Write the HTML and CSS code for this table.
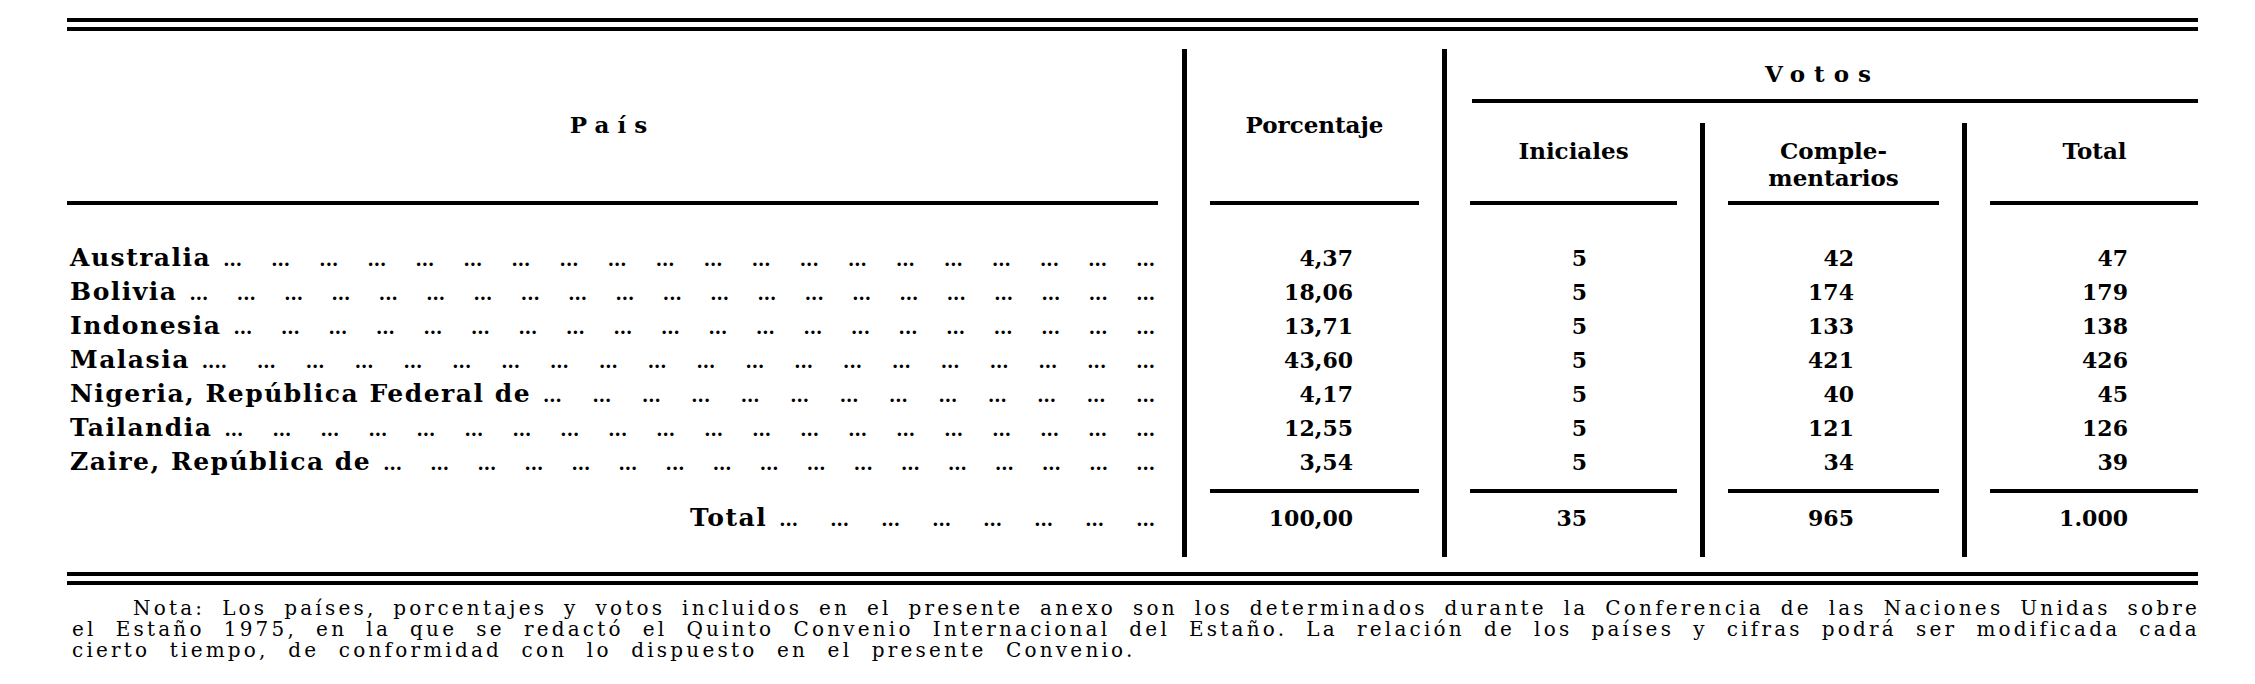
FILE: index.html
```html
<!DOCTYPE html>
<html lang="es">
<head>
<meta charset="utf-8">
<title>Votos</title>
<link rel="stylesheet" href="styles.css">
</head>
<body>
<div class="page">
  <div class="rule2"><div></div><div></div></div>

  <div class="tbl">
    <div class="head">
      <div class="h-a">País</div>
      <div class="h-b">Porcentaje</div>
      <div class="votos">
        <div class="votos-t">Votos</div>
        <div class="votos-r"></div>
        <div class="sub">
          <div class="s-c">Iniciales</div>
          <div class="s-d">Comple-<br>mentarios</div>
          <div class="s-e">Total</div>
        </div>
      </div>
    </div>

    <div class="row bars">
      <div class="cell a"><div class="bar"></div></div>
      <div class="cell b"><div class="bar"></div></div>
      <div class="cell c"><div class="bar"></div></div>
      <div class="cell d"><div class="bar"></div></div>
      <div class="cell e"><div class="bar"></div></div>
    </div>
    <div class="row gap-a"><div class="cell a"></div><div class="cell b"></div><div class="cell c"></div><div class="cell d"></div><div class="cell e"></div></div>

    <div class="row data">
      <div class="cell a name"><span class="nm">Australia</span><span class="lead">... ... ... ... ... ... ... ... ... ... ... ... ... ... ... ... ... ... ... ...</span></div>
      <div class="cell b"><span class="n">4,37</span></div>
      <div class="cell c"><span class="n">5</span></div>
      <div class="cell d"><span class="n">42</span></div>
      <div class="cell e"><span class="n">47</span></div>
    </div>
    <div class="row data">
      <div class="cell a name"><span class="nm">Bolivia</span><span class="lead">... ... ... ... ... ... ... ... ... ... ... ... ... ... ... ... ... ... ... ... ...</span></div>
      <div class="cell b"><span class="n">18,06</span></div>
      <div class="cell c"><span class="n">5</span></div>
      <div class="cell d"><span class="n">174</span></div>
      <div class="cell e"><span class="n">179</span></div>
    </div>
    <div class="row data">
      <div class="cell a name"><span class="nm">Indonesia</span><span class="lead">... ... ... ... ... ... ... ... ... ... ... ... ... ... ... ... ... ... ... ...</span></div>
      <div class="cell b"><span class="n">13,71</span></div>
      <div class="cell c"><span class="n">5</span></div>
      <div class="cell d"><span class="n">133</span></div>
      <div class="cell e"><span class="n">138</span></div>
    </div>
    <div class="row data">
      <div class="cell a name"><span class="nm">Malasia</span><span class="lead">.... ... ... ... ... ... ... ... ... ... ... ... ... ... ... ... ... ... ... ...</span></div>
      <div class="cell b"><span class="n">43,60</span></div>
      <div class="cell c"><span class="n">5</span></div>
      <div class="cell d"><span class="n">421</span></div>
      <div class="cell e"><span class="n">426</span></div>
    </div>
    <div class="row data">
      <div class="cell a name"><span class="nm">Nigeria, República Federal de</span><span class="lead">... ... ... ... ... ... ... ... ... ... ... ... ...</span></div>
      <div class="cell b"><span class="n">4,17</span></div>
      <div class="cell c"><span class="n">5</span></div>
      <div class="cell d"><span class="n">40</span></div>
      <div class="cell e"><span class="n">45</span></div>
    </div>
    <div class="row data">
      <div class="cell a name"><span class="nm">Tailandia</span><span class="lead">... ... ... ... ... ... ... ... ... ... ... ... ... ... ... ... ... ... ... ...</span></div>
      <div class="cell b"><span class="n">12,55</span></div>
      <div class="cell c"><span class="n">5</span></div>
      <div class="cell d"><span class="n">121</span></div>
      <div class="cell e"><span class="n">126</span></div>
    </div>
    <div class="row data">
      <div class="cell a name"><span class="nm">Zaire, República de</span><span class="lead">... ... ... ... ... ... ... ... ... ... ... ... ... ... ... ... ...</span></div>
      <div class="cell b"><span class="n">3,54</span></div>
      <div class="cell c"><span class="n">5</span></div>
      <div class="cell d"><span class="n">34</span></div>
      <div class="cell e"><span class="n">39</span></div>
    </div>

    <div class="row gap-b"><div class="cell a"></div><div class="cell b"></div><div class="cell c"></div><div class="cell d"></div><div class="cell e"></div></div>
    <div class="row bars">
      <div class="cell a"></div>
      <div class="cell b"><div class="bar"></div></div>
      <div class="cell c"><div class="bar"></div></div>
      <div class="cell d"><div class="bar"></div></div>
      <div class="cell e"><div class="bar"></div></div>
    </div>
    <div class="row gap-c"><div class="cell a"></div><div class="cell b"></div><div class="cell c"></div><div class="cell d"></div><div class="cell e"></div></div>

    <div class="row data total">
      <div class="cell a name"><span class="nm">Total</span><span class="lead">... ... ... ... ... ... ... ...</span></div>
      <div class="cell b"><span class="n">100,00</span></div>
      <div class="cell c"><span class="n">35</span></div>
      <div class="cell d"><span class="n">965</span></div>
      <div class="cell e"><span class="n">1.000</span></div>
    </div>
    <div class="row gap-d"><div class="cell a"></div><div class="cell b"></div><div class="cell c"></div><div class="cell d"></div><div class="cell e"></div></div>
  </div>

  <div class="rule2 bottom"><div></div><div></div></div>

  <div class="note">
    <p class="nl first">Nota: Los países, porcentajes y votos incluidos en el presente anexo son los determinados durante la Conferencia de las Naciones Unidas sobre</p>
    <p class="nl">el Estaño 1975, en la que se redactó el Quinto Convenio Internacional del Estaño. La relación de los países y cifras podrá ser modificada cada</p>
    <p class="nl last">cierto tiempo, de conformidad con lo dispuesto en el presente Convenio.</p>
  </div>
</div>
</body>
</html>
```

FILE: styles.css
```css
html, body {
  margin: 0;
  padding: 0;
  background: #ffffff;
  color: #000000;
}

.page {
  padding: 18px 0 0 67px;
  font-family: "DejaVu Serif", "Liberation Serif", serif;
}

/* double rules */
.rule2 {
  width: 2131px;
}
.rule2 div {
  height: 4px;
  background: #000;
}
.rule2 div + div {
  margin-top: 5px;
}
.rule2.bottom {
  margin-top: 15px;
}

/* table */
.tbl {
  width: 2131px;
  margin-top: 18px;
}

.head {
  display: flex;
  height: 152px;
  font-size: 23px;
  font-weight: bold;
}
.h-a {
  width: 1115px;
  box-sizing: border-box;
  padding: 62px 24px 0 0;
  line-height: 28px;
  text-align: center;
  letter-spacing: 8px;
}
.h-b {
  width: 260px;
  box-sizing: border-box;
  border-left: 5px solid #000;
  padding-top: 62px;
  line-height: 28px;
  text-align: center;
}
.votos {
  width: 756px;
  box-sizing: border-box;
  border-left: 5px solid #000;
  display: flex;
  flex-direction: column;
}
.votos-t {
  height: 50px;
  box-sizing: border-box;
  padding-top: 11px;
  line-height: 28px;
  text-align: center;
  letter-spacing: 9px;
}
.votos-r {
  height: 4px;
  background: #000;
  margin-left: 25px;
}
.sub {
  display: flex;
  height: 98px;
  box-sizing: border-box;
  padding-top: 20px;
}
.sub > div {
  box-sizing: border-box;
  padding-top: 14px;
  line-height: 27px;
  text-align: center;
}
.s-c { width: 253px; }
.s-d { width: 262px; border-left: 5px solid #000; }
.s-e { width: 236px; border-left: 5px solid #000; padding-left: 24px; }

/* rows */
.row {
  display: flex;
}
.cell {
  box-sizing: border-box;
  flex: none;
}
.a { width: 1115px; }
.b { width: 260px; border-left: 5px solid #000; }
.c { width: 258px; border-left: 5px solid #000; }
.d { width: 262px; border-left: 5px solid #000; }
.e { width: 236px; border-left: 5px solid #000; }

.bars { height: 4px; }
.bar {
  height: 4px;
  background: #000;
  margin: 0 23px;
}
.a .bar { margin: 0 24px 0 0; }
.e .bar { margin: 0 0 0 23px; }

.gap-a { height: 36px; }
.gap-b { height: 10px; }
.gap-c { height: 8px; }
.gap-d { height: 22px; }

.data {
  height: 34px;
}
.data .cell {
  font-size: 25px;
  line-height: 34px;
  font-weight: bold;
  text-align: right;
  white-space: nowrap;
}
.data .b { padding-right: 89px; }
.data .c { padding-right: 113px; }
.data .d { padding-right: 108px; }
.data .e { padding-right: 70px; }

.n {
  font-size: 22px;
  line-height: 1;
}

.data .name {
  display: flex;
  align-items: baseline;
  text-align: left;
  padding: 0 27px 0 3px;
}
.nm {
  flex: none;
  letter-spacing: 1.5px;
}
.lead {
  flex: 1 1 auto;
  margin-left: 12px;
  font-size: 18px;
  line-height: 1;
  white-space: normal;
  text-align: justify;
  text-align-last: justify;
  word-spacing: 19px;
}
.total .name {
  padding-left: 623px;
}

/* note */
.note {
  margin: 13px 0 0 5px;
  width: 2128px;
  font-size: 20px;
  line-height: 21px;
  letter-spacing: 3.2px;
  word-spacing: 4px;
}
.nl {
  margin: 0;
  text-align: justify;
  text-align-last: justify;
}
.nl.first {
  text-indent: 61px;
}
.nl.last {
  text-align: left;
  text-align-last: left;
  word-spacing: 10px;
}
```
